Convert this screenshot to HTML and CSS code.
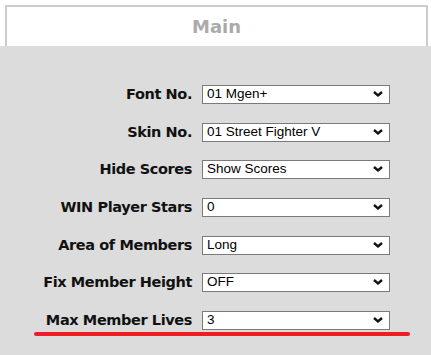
FILE: index.html
```html
<!DOCTYPE html>
<html>
<head>
<meta charset="utf-8">
<link rel="stylesheet" href="styles.css">
</head>
<body>
<div class="header"><h1 class="title">Main</h1></div>
<div class="panel">
  <div class="form">
    <label class="label">Font No.</label>
    <div class="field"><div class="select">01 Mgen+</div><svg class="chev" viewBox="0 0 10 6"><path d="M1 1 L5 4.4 L9 1" fill="none" stroke="#111" stroke-width="2.4"/></svg></div>
    <label class="label">Skin No.</label>
    <div class="field"><div class="select">01 Street Fighter V</div><svg class="chev" viewBox="0 0 10 6"><path d="M1 1 L5 4.4 L9 1" fill="none" stroke="#111" stroke-width="2.4"/></svg></div>
    <label class="label">Hide Scores</label>
    <div class="field"><div class="select">Show Scores</div><svg class="chev" viewBox="0 0 10 6"><path d="M1 1 L5 4.4 L9 1" fill="none" stroke="#111" stroke-width="2.4"/></svg></div>
    <label class="label">WIN Player Stars</label>
    <div class="field"><div class="select">0</div><svg class="chev" viewBox="0 0 10 6"><path d="M1 1 L5 4.4 L9 1" fill="none" stroke="#111" stroke-width="2.4"/></svg></div>
    <label class="label">Area of Members</label>
    <div class="field"><div class="select">Long</div><svg class="chev" viewBox="0 0 10 6"><path d="M1 1 L5 4.4 L9 1" fill="none" stroke="#111" stroke-width="2.4"/></svg></div>
    <label class="label">Fix Member Height</label>
    <div class="field"><div class="select">OFF</div><svg class="chev" viewBox="0 0 10 6"><path d="M1 1 L5 4.4 L9 1" fill="none" stroke="#111" stroke-width="2.4"/></svg></div>
    <label class="label">Max Member Lives</label>
    <div class="field"><div class="select">3</div><svg class="chev" viewBox="0 0 10 6"><path d="M1 1 L5 4.4 L9 1" fill="none" stroke="#111" stroke-width="2.4"/></svg></div>
  </div>
  <div class="underline"></div>
</div>
</body>
</html>
```
FILE: styles.css
```css
html, body {
  margin: 0;
  padding: 0;
  background: #ffffff;
  overflow: hidden;
}
body {
  width: 431px;
  height: 355px;
}
.header {
  margin: 5px 3px 0 5px;
  height: 41px;
  border: 2px solid #cccccc;
  border-bottom: none;
  box-sizing: border-box;
  background: #fff;
}
.title {
  margin: 0;
  padding-top: 8px;
  text-align: center;
  font-family: "DejaVu Sans", Verdana, sans-serif;
  font-weight: bold;
  font-size: 18px;
  line-height: 24px;
  color: #aaaaaa;
}
.panel {
  background: #dcdcdc;
  height: 309px;
  padding-top: 39px;
  box-sizing: border-box;
}
.form {
  display: grid;
  grid-template-columns: 192px 188px;
  column-gap: 10px;
  row-gap: 18.67px;
  align-items: center;
}
.label {
  text-align: right;
  font-family: "DejaVu Sans", Verdana, sans-serif;
  font-weight: bold;
  font-size: 14.5px;
  letter-spacing: -0.4px;
  line-height: 19px;
  color: #111111;
  white-space: nowrap;
}
.field {
  position: relative;
  height: 19px;
}
.select {
  height: 19px;
  box-sizing: border-box;
  border: 1px solid #7a7a7a;
  background: #ffffff;
  font-family: "Liberation Sans", Arial, sans-serif;
  font-size: 13.5px;
  line-height: 16px;
  padding-left: 4px;
  color: #000;
}
.chev {
  position: absolute;
  left: 171px;
  top: 6px;
  width: 10px;
  height: 6px;
}
.underline {
  margin: 2px 0 0 34px;
  width: 376px;
  height: 4px;
  border-radius: 2px;
  background: #ee1c25;
}
```
